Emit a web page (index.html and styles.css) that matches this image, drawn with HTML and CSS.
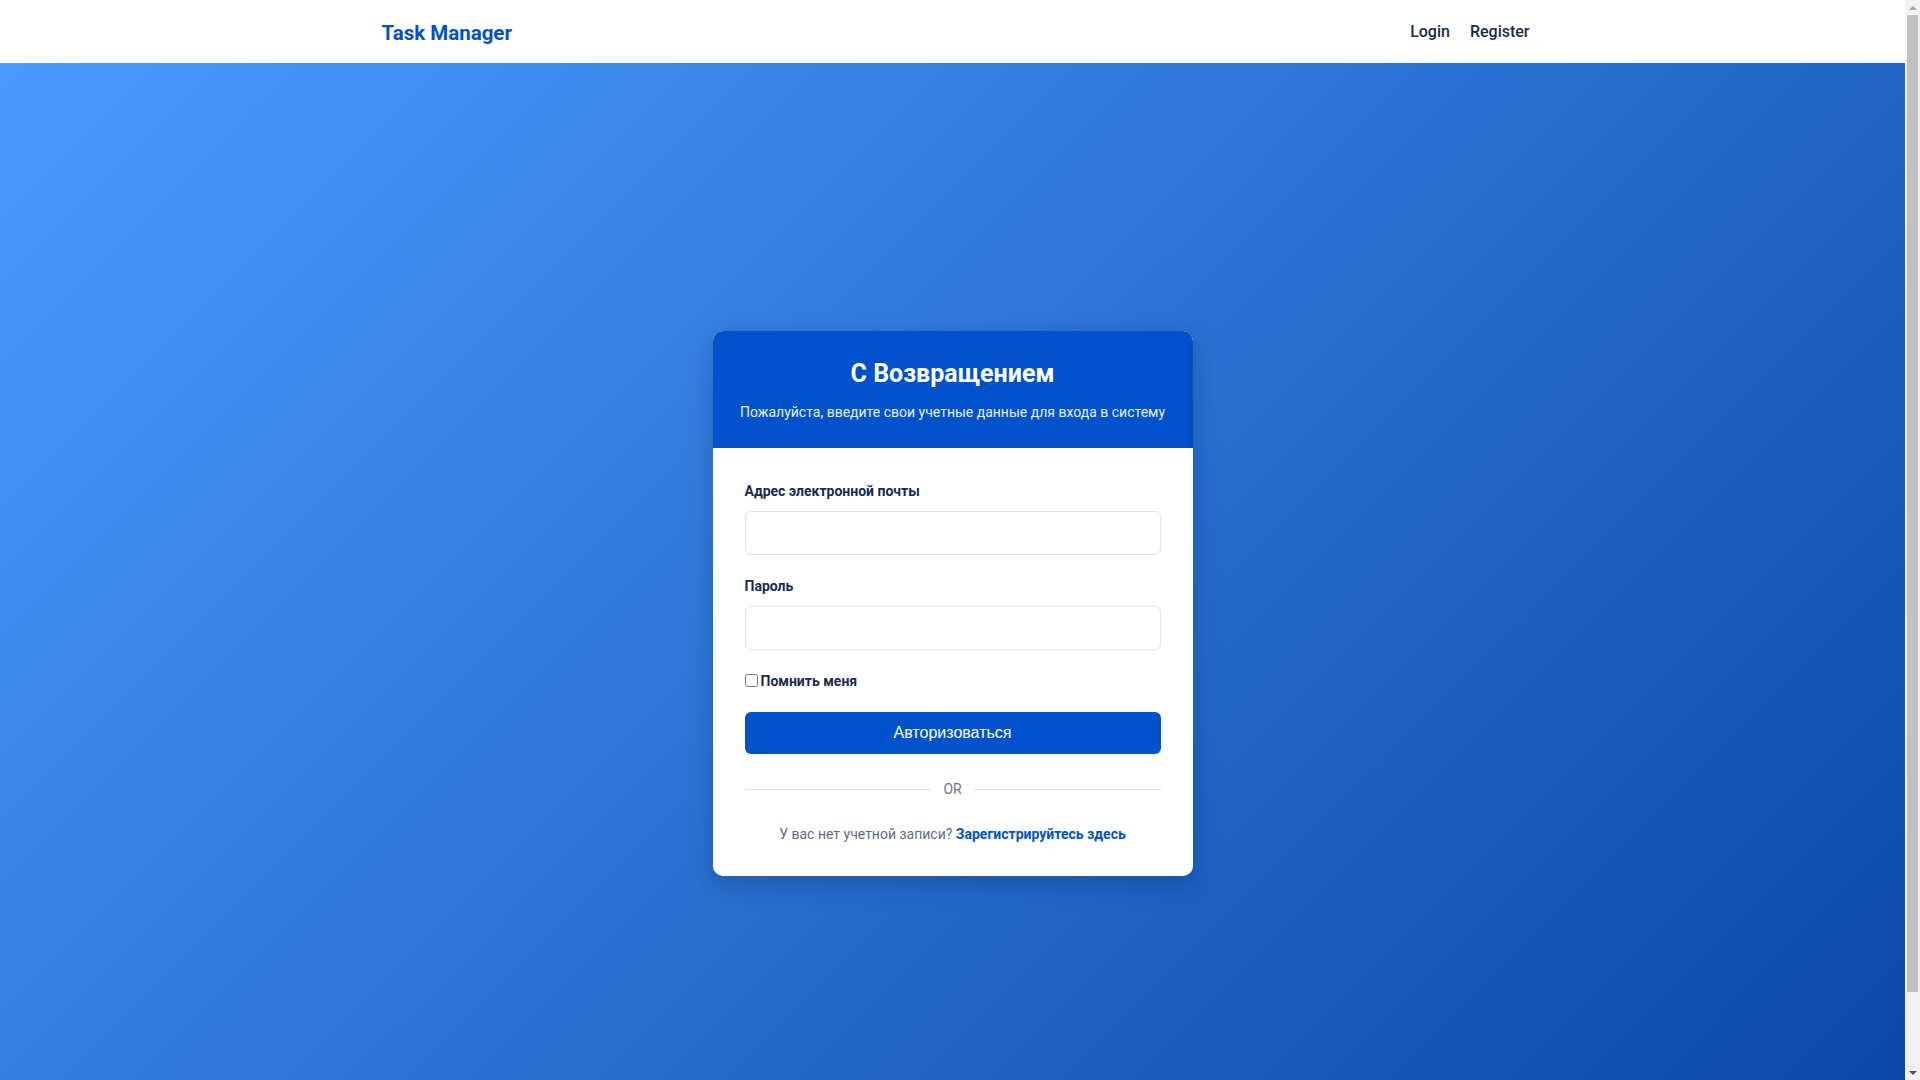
FILE: index.html
```html
<!DOCTYPE html>
<html lang="ru">
<head>
<meta charset="utf-8">
<title>Task Manager</title>
<link rel="stylesheet" href="styles.css">
</head>
<body>
<div class="page">
  <header class="topbar">
    <div class="container topbar-inner">
      <a class="brand" href="#">Task Manager</a>
      <nav class="nav">
        <a class="nav-link" href="#">Login</a>
        <a class="nav-link" href="#">Register</a>
      </nav>
    </div>
  </header>
  <main class="main">
    <div class="card">
      <div class="card-header">
        <h1 class="card-title">С Возвращением</h1>
        <p class="card-subtitle">Пожалуйста, введите свои учетные данные для входа в систему</p>
      </div>
      <form class="card-body">
        <div class="form-group">
          <label class="form-label" for="email">Адрес электронной почты</label>
          <input class="form-input" id="email" type="email">
        </div>
        <div class="form-group">
          <label class="form-label" for="password">Пароль</label>
          <input class="form-input" id="password" type="password">
        </div>
        <div class="remember">
          <input class="remember-box" id="remember" type="checkbox">
          <label class="remember-label" for="remember">Помнить меня</label>
        </div>
        <button class="btn-primary" type="button">Авторизоваться</button>
        <div class="divider"><span class="divider-text">OR</span></div>
        <p class="signup">У вас нет учетной записи? <a class="signup-link" href="#">Зарегистрируйтесь здесь</a></p>
      </form>
    </div>
  </main>
</div>
<div class="scrollbar" aria-hidden="true">
  <span class="scroll-arrow up"></span>
  <span class="scroll-track"><span class="scroll-thumb"></span></span>
  <span class="scroll-arrow down"></span>
</div>
</body>
</html>
```
FILE: styles.css
```css
* { box-sizing: border-box; }
html, body { margin: 0; padding: 0; }
body {
  font-family: Roboto, "Noto Sans", sans-serif;
  color: #172b4d;
  padding-right: 15px;
}
a { text-decoration: none; }

.topbar {
  background: #ffffff;
  height: 63px;
}
.container {
  max-width: 1170px;
  margin: 0 auto;
  padding: 0 15px;
}
.topbar-inner {
  height: 100%;
  display: flex;
  align-items: center;
  justify-content: space-between;
}
.brand {
  color: #0052cc;
  font-size: 20.5px;
  font-weight: 700;
  margin-left: -1px;
  margin-top: 2px;
}
.nav {
  display: flex;
  gap: 20px;
  margin-right: -7px;
}
.nav-link {
  color: #172b4d;
  font-size: 16px;
  font-weight: 500;
}

.main {
  min-height: 100vh;
  background: linear-gradient(135deg, #4c9aff 0%, #0747a6 100%);
  display: flex;
  align-items: center;
  justify-content: center;
}
.card {
  width: 480px;
  background: #ffffff;
  border-radius: 10px;
  overflow: hidden;
  box-shadow: 0 8px 24px rgba(9, 30, 66, 0.25);
}
.card-header {
  background: #0052cc;
  color: #ffffff;
  text-align: center;
  padding: 28px 16px 25px;
}
.card-title {
  margin: 0 0 14px;
  font-size: 25px;
  line-height: 29px;
  font-weight: 700;
}
.card-subtitle {
  margin: 0;
  font-size: 14px;
  line-height: 21px;
  opacity: 0.92;
}
.card-body {
  padding: 32px 32px 31px;
}
.form-group {
  margin-bottom: 20px;
}
.form-label {
  display: block;
  font-size: 14px;
  line-height: 22px;
  font-weight: 700;
  margin-bottom: 9px;
  color: #172b4d;
}
.form-input {
  display: block;
  width: 100%;
  height: 44px;
  border: 1px solid #dfe1e6;
  border-radius: 6px;
  padding: 0 12px;
  font-size: 14px;
  background: #ffffff;
}
.remember {
  display: flex;
  align-items: center;
  height: 22px;
  margin-bottom: 20px;
}
.remember-box {
  margin: 0 3px 0 0;
  width: 13px;
  height: 13px;
}
.remember-label {
  font-size: 14px;
  font-weight: 700;
  color: #172b4d;
}
.btn-primary {
  display: block;
  width: 100%;
  height: 42px;
  border: none;
  border-radius: 6px;
  background: #0052cc;
  color: #ffffff;
  font-family: "Liberation Sans", Arial, sans-serif;
  font-size: 16px;
  cursor: pointer;
}
.divider {
  display: flex;
  align-items: center;
  gap: 12px;
  margin-top: 25px;
  font-size: 14px;
  line-height: 21px;
  color: #6b778c;
}
.divider::before,
.divider::after {
  content: "";
  flex: 1;
  height: 1px;
  background: #dfe1e6;
}
.signup {
  margin: 24px 0 0;
  text-align: center;
  font-size: 14px;
  line-height: 21px;
  color: #5e6c84;
}
.signup-link {
  color: #0052cc;
  font-weight: 700;
}

.scrollbar {
  position: fixed;
  top: 0;
  right: 0;
  width: 15px;
  height: 100vh;
  background: #f1f1f1;
  display: flex;
  flex-direction: column;
  align-items: center;
}
.scroll-arrow {
  width: 15px;
  height: 15px;
  display: flex;
  align-items: center;
  justify-content: center;
}
.scroll-arrow::before {
  content: "";
  border-left: 4px solid transparent;
  border-right: 4px solid transparent;
}
.scroll-arrow.up::before { border-bottom: 4px solid #a3a3a3; }
.scroll-arrow.down::before { border-top: 4px solid #505050; }
.scroll-track {
  flex: 1;
  width: 100%;
  padding: 0 2px;
}
.scroll-thumb {
  display: block;
  height: 93%;
  background: #c1c1c1;
}
```
